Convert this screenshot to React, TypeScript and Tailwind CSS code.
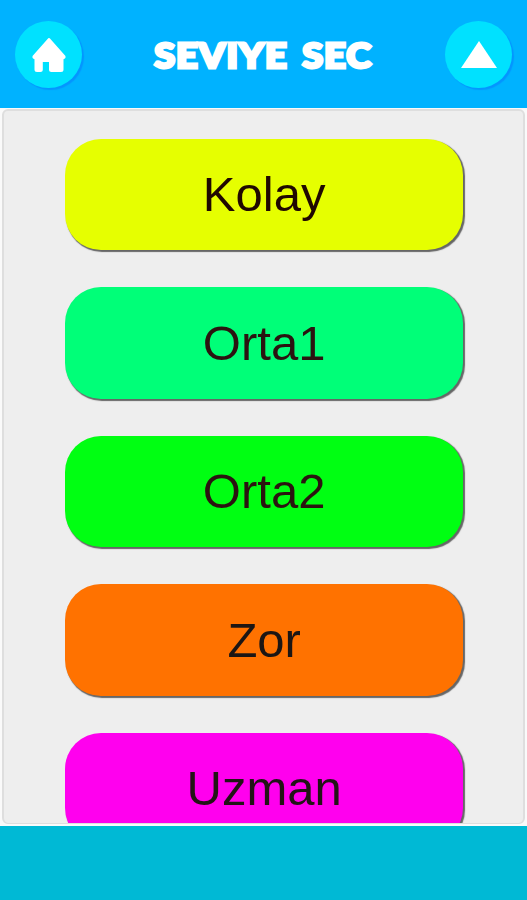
const levels = [
  { name: "Kolay", color: "bg-[#e6ff00]", text: "text-[#200800]" },
  { name: "Orta1", color: "bg-[#00ff78]", text: "text-[#2b1410]" },
  { name: "Orta2", color: "bg-[#00ff12]", text: "text-[#2b1410]" },
  { name: "Zor", color: "bg-[#ff7200]", text: "text-[#1c1614]" },
  { name: "Uzman", color: "bg-[#ff00ee]", text: "text-[#221416]" },
];

const roundButton =
  "flex size-[67px] items-center justify-center rounded-full bg-[#00e1ff] shadow-[2px_2px_1px_#0595ff]";

const Header = () => {
  return (
    <header className="flex h-[108px] shrink-0 items-start justify-between bg-[#00b2ff] px-[15px] pt-[21px]">
      <button className={roundButton} aria-label="Ana sayfa">
        <svg viewBox="0 0 34 36" className="h-9 w-[34px]" fill="#fff" stroke="#fff" strokeWidth="2" strokeLinejoin="round">
          <path d="M17 2 32.5 19.5V20.5L30.5 22V32.5Q30.5 34 29 34H19.500Q18 34 18 32.500V24H9.800V32.500Q9.800 34 8.300 34H5Q3.500 34 3.500 32.500V22L1.500 20.500V19.500Z" />
        </svg>
      </button>
      <h1 className="mt-[9px] flex h-[50px] scale-x-[1.11] items-center gap-[13px] font-['Lato','Liberation_Sans',sans-serif] text-[34px] font-black leading-[50px] tracking-[1px] text-white [-webkit-text-stroke:3px_#fff]">
        <span>SEVIYE</span>
        <span>SEC</span>
      </h1>
      <button className={roundButton} aria-label="Yukarı">
        <svg viewBox="0 0 36 28" className="h-7 w-9" fill="#fff">
          <path d="M18 0 36 27H0Z" />
        </svg>
      </button>
    </header>
  );
};

const App = () => {
  return (
    <div className="flex h-[900px] w-[527px] flex-col overflow-hidden bg-[#00b9d5]">
      <Header />
      <main className="h-[718px] shrink-0 bg-[#fafafa] px-[2px] pb-[2px] pt-px">
        <div className="h-full overflow-hidden rounded-[6px] border-2 border-b border-[#dedede] bg-[#eee]">
          <div className="flex flex-col gap-[36.9px] pl-[61.4px] pt-[27.9px]">
            {levels.map((level) => (
              <button
                key={level.name}
                className={`h-[111.6px] w-[397.5px] shrink-0 rounded-[36px] pb-px pt-px font-['Liberation_Sans',Arial,sans-serif] text-[49px] leading-none shadow-[1.5px_1.5px_1px_#666] ${level.color} ${level.text}`}
              >
                {level.name}
              </button>
            ))}
          </div>
        </div>
      </main>
    </div>
  );
};

export default App;
